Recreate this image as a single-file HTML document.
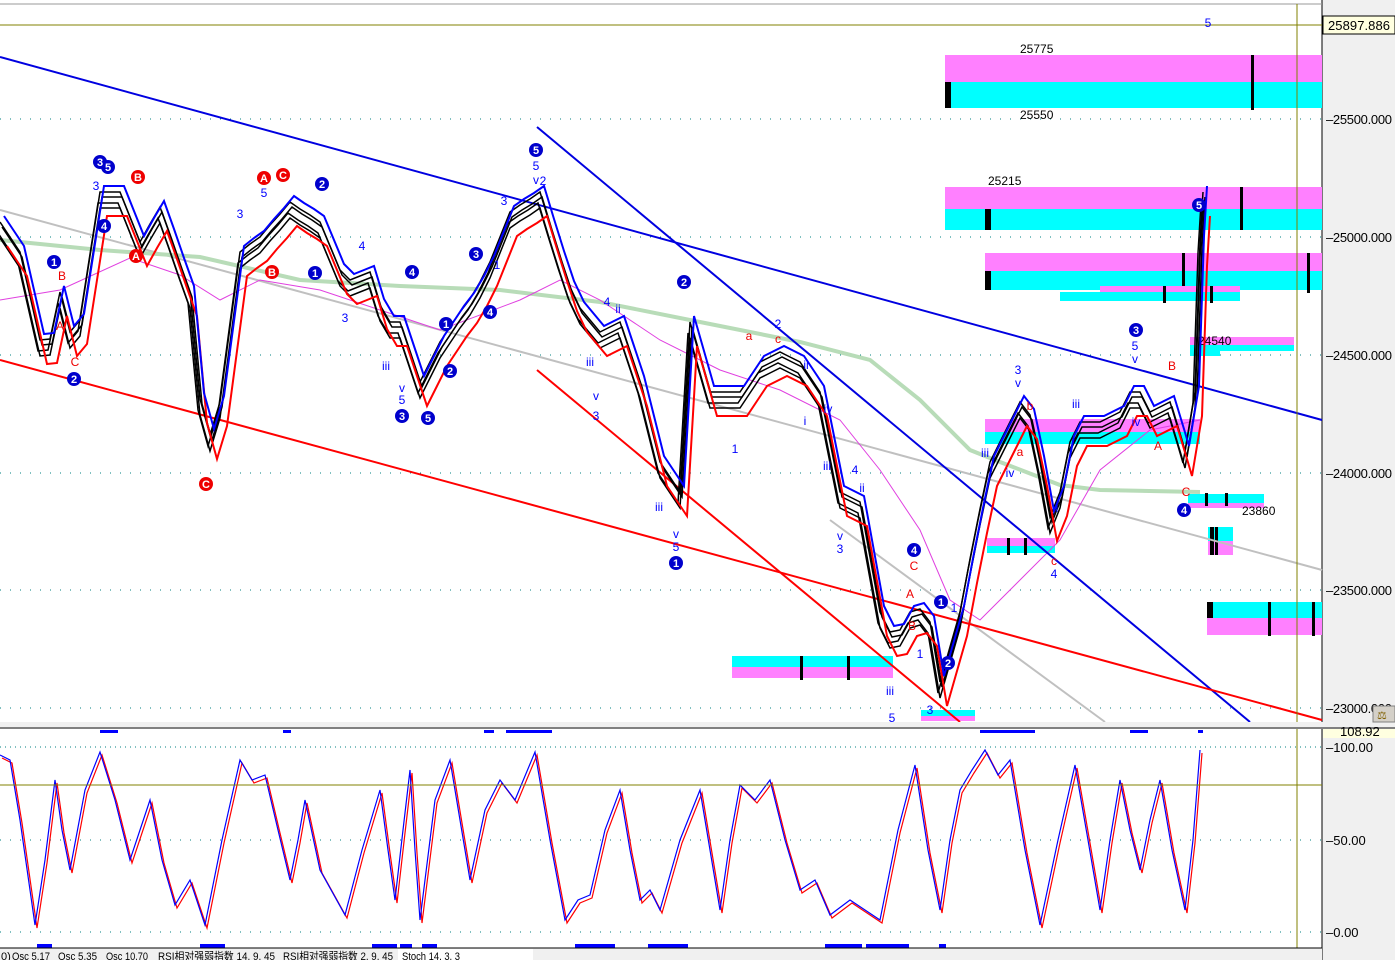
<!DOCTYPE html>
<html><head><meta charset="utf-8"><style>
html,body{margin:0;padding:0;background:#fff;width:1395px;height:960px;overflow:hidden;font-family:"Liberation Sans",sans-serif}
svg{position:absolute;left:0;top:0}
</style></head><body>
<svg width="1395" height="960" xmlns="http://www.w3.org/2000/svg" xmlns:xlink="http://www.w3.org/1999/xlink" font-family="Liberation Sans, sans-serif">
<defs>
<polyline id="pp" fill="none" points="0,230 10,245 20,260 30,304 40,348 50,347 60,300 70,340 80,328 90,264 100,200 110,200 120,200 130,225 140,250 150,232 160,215 170,243 180,272 190,300 200,407 210,443 220,410 230,335 240,260 250,252 260,245 270,233 280,222 290,210 300,217 310,223 320,230 330,254 340,278 350,288 360,284 370,280 380,313 390,330 400,330 410,360 420,390 430,370 440,350 450,335 460,320 470,307 480,290 490,270 500,245 510,220 520,213 530,207 540,200 550,233 560,265 570,295 580,316 590,328 600,340 610,335 620,330 630,360 640,390 650,430 660,470 670,485 680,500 690,330 700,365 710,400 720,400 730,400 740,400 750,385 760,370 770,365 780,360 790,365 800,370 810,385 820,400 830,450 840,500 850,505 860,510 870,565 880,620 890,640 900,638 910,620 920,617 930,630 940,690 950,655 960,620 970,567 980,517 990,470 1000,450 1010,430 1020,410 1030,423 1040,470 1050,525 1060,500 1070,450 1080,430 1090,430 1100,430 1110,425 1120,420 1130,400 1140,400 1150,420 1160,415 1170,410 1180,443 1185,460 1190,430 1195,400 1200,250 1203,200"/>
<polyline id="oo" fill="none" points="0,755 10,760 20,820 35,925 45,860 55,780 62,830 70,870 85,790 100,752 115,800 130,860 140,830 150,800 162,860 175,905 190,880 205,925 222,840 240,760 252,780 265,775 278,830 290,880 298,840 305,800 320,870 345,915 362,850 380,790 388,850 395,900 403,830 410,770 415,850 420,920 435,800 450,760 460,820 470,880 485,810 500,780 515,800 535,752 550,840 565,920 578,900 590,895 605,830 620,790 630,850 640,900 650,890 660,910 680,840 700,790 710,850 720,910 730,840 740,785 755,800 770,780 785,840 800,890 815,880 830,915 850,900 865,910 880,920 898,830 915,765 928,850 940,910 950,840 960,790 972,770 985,750 998,775 1010,760 1025,850 1040,925 1058,840 1075,765 1088,840 1100,910 1110,840 1120,780 1130,830 1140,870 1150,820 1160,780 1172,850 1185,910 1193,840 1200,750"/>
</defs>
<rect x="1322" y="0" width="73" height="960" fill="#f0f0f0"/>
<line x1="1322" y1="0" x2="1322" y2="960" stroke="#000"/>
<line x1="0" y1="4" x2="1322" y2="4" stroke="#999"/>
<g stroke="#008080" stroke-dasharray="1 9">
<line x1="0" y1="119" x2="1322" y2="119"/><line x1="0" y1="237" x2="1322" y2="237"/><line x1="0" y1="355" x2="1322" y2="355"/><line x1="0" y1="473" x2="1322" y2="473"/><line x1="0" y1="590" x2="1322" y2="590"/><line x1="0" y1="708" x2="1322" y2="708"/><line x1="0" y1="840" x2="1322" y2="840"/><line x1="0" y1="932" x2="1322" y2="932"/>
</g>
<g>
<rect x="945" y="55" width="377" height="27" fill="#ff80ff"/><rect x="945" y="82" width="377" height="26" fill="#00ffff"/>
<rect x="945" y="82" width="6" height="26" fill="#000"/><rect x="1251" y="55" width="3" height="55" fill="#000"/>
<rect x="945" y="187" width="377" height="22" fill="#ff80ff"/><rect x="945" y="209" width="377" height="21" fill="#00ffff"/>
<rect x="985" y="209" width="6" height="21" fill="#000"/><rect x="1240" y="187" width="3" height="43" fill="#000"/>
<rect x="985" y="253" width="337" height="18" fill="#ff80ff"/><rect x="985" y="271" width="337" height="19" fill="#00ffff"/>
<rect x="985" y="271" width="6" height="19" fill="#000"/><rect x="1182" y="253" width="3" height="37" fill="#000"/><rect x="1307" y="253" width="3" height="40" fill="#000"/>
<rect x="1100" y="286" width="140" height="8" fill="#ff80ff"/><rect x="1060" y="292" width="180" height="9" fill="#00ffff"/>
<rect x="1163" y="286" width="3" height="17" fill="#000"/><rect x="1210" y="286" width="3" height="17" fill="#000"/>
<rect x="1190" y="337" width="104" height="8" fill="#ff80ff"/><rect x="1190" y="345" width="104" height="6" fill="#00ffff"/>
<rect x="1190" y="350" width="30" height="6" fill="#00ffff"/>
<rect x="985" y="419" width="215" height="13" fill="#ff80ff"/><rect x="985" y="432" width="215" height="12" fill="#00ffff"/>
<rect x="987" y="538" width="68" height="8" fill="#ff80ff"/><rect x="987" y="546" width="68" height="7" fill="#00ffff"/>
<rect x="1007" y="538" width="3" height="17" fill="#000"/><rect x="1024" y="538" width="3" height="17" fill="#000"/>
<rect x="1188" y="494" width="76" height="9" fill="#00ffff"/><rect x="1188" y="503" width="76" height="5" fill="#ff80ff"/>
<rect x="1205" y="493" width="3" height="13" fill="#000"/><rect x="1225" y="493" width="3" height="13" fill="#000"/>
<rect x="1208" y="527" width="25" height="14" fill="#00ffff"/><rect x="1208" y="541" width="25" height="14" fill="#ff80ff"/>
<rect x="1210" y="527" width="4" height="28" fill="#000"/><rect x="1215" y="527" width="3" height="28" fill="#000"/>
<rect x="1207" y="602" width="115" height="16" fill="#00ffff"/><rect x="1207" y="618" width="115" height="17" fill="#ff80ff"/>
<rect x="1207" y="602" width="6" height="16" fill="#000"/><rect x="1268" y="602" width="3" height="34" fill="#000"/><rect x="1312" y="602" width="3" height="34" fill="#000"/>
<rect x="732" y="656" width="161" height="11" fill="#00ffff"/><rect x="732" y="667" width="161" height="11" fill="#ff80ff"/>
<rect x="800" y="656" width="3" height="24" fill="#000"/><rect x="847" y="656" width="3" height="24" fill="#000"/>
<rect x="921" y="710" width="54" height="6" fill="#00ffff"/><rect x="921" y="716" width="54" height="5" fill="#ff80ff"/>
</g>
<g font-size="12" fill="#000">
<text x="1020" y="53">25775</text><text x="1020" y="119">25550</text><text x="988" y="185">25215</text>
<text x="1198" y="345">24540</text><text x="1242" y="515">23860</text>
</g>
<polyline points="0,210 1322,570" stroke="#c0c0c0" stroke-width="2" fill="none"/>
<polyline points="830,520 1105,722" stroke="#c0c0c0" stroke-width="2" fill="none"/>
<polyline points="0,240 100,250 200,257 300,280 400,286 500,290 600,302 700,322 800,342 870,360 920,400 970,450 1000,462 1060,485 1100,490 1200,492" stroke="#b8dcb8" stroke-width="4" fill="none"/>
<polyline points="0,300 60,290 130,258 180,275 220,300 260,280 320,290 380,310 440,330 520,300 560,280 600,300 660,340 720,370 780,390 840,420 880,470 920,530 950,600 980,620 1020,580 1060,540 1100,470 1150,430 1200,420" stroke="#e040e0" stroke-width="1" fill="none"/>
<polyline points="0,57 1322,420" stroke="#0000e0" stroke-width="2" fill="none"/>
<polyline points="537,127 1250,722" stroke="#0000e0" stroke-width="2" fill="none"/>
<polyline points="0,360 1322,720" stroke="#ff0000" stroke-width="2" fill="none"/>
<polyline points="537,370 960,722" stroke="#ff0000" stroke-width="2" fill="none"/>
<use xlink:href="#pp" href="#pp" stroke="#000" stroke-width="1.5" transform="translate(0,-8)"/>
<use xlink:href="#pp" href="#pp" stroke="#000" stroke-width="1.5" transform="translate(2,-3)"/>
<use xlink:href="#pp" href="#pp" stroke="#000" stroke-width="1.5" transform="translate(-2,3)"/>
<use xlink:href="#pp" href="#pp" stroke="#000" stroke-width="1.5" transform="translate(0,8)"/>
<use xlink:href="#pp" href="#pp" stroke="#ff0000" stroke-width="2" transform="translate(7,16)"/>
<use xlink:href="#pp" href="#pp" stroke="#0000ff" stroke-width="2" transform="translate(4,-14)"/>
<use xlink:href="#oo" href="#oo" stroke="#ff0000" stroke-width="1.2" transform="translate(2,3)"/>
<use xlink:href="#oo" href="#oo" stroke="#0000ff" stroke-width="1.2"/>
<line x1="1297" y1="4" x2="1297" y2="960" stroke="#808000"/>
<line x1="0" y1="25" x2="1322" y2="25" stroke="#808000"/>
<line x1="0" y1="785" x2="1322" y2="785" stroke="#808000"/>
<line x1="0" y1="747" x2="1322" y2="747" stroke="#008080" stroke-dasharray="1 4"/>
<rect x="0" y="722" width="1395" height="6" fill="#f0f0f0"/>
<line x1="0" y1="728" x2="1395" y2="728" stroke="#808080" stroke-width="2"/>
<g fill="#0000ff">
<rect x="100" y="730" width="18" height="3"/><rect x="283" y="730" width="8" height="3"/><rect x="484" y="730" width="10" height="3"/><rect x="506" y="730" width="46" height="3"/><rect x="980" y="730" width="55" height="3"/><rect x="1130" y="730" width="18" height="3"/><rect x="1198" y="730" width="5" height="3"/>
<rect x="37" y="944" width="15" height="4"/><rect x="200" y="944" width="25" height="4"/><rect x="372" y="944" width="25" height="4"/><rect x="400" y="944" width="12" height="4"/><rect x="422" y="944" width="15" height="4"/><rect x="575" y="944" width="40" height="4"/><rect x="648" y="944" width="40" height="4"/><rect x="825" y="944" width="37" height="4"/><rect x="866" y="944" width="43" height="4"/><rect x="939" y="944" width="7" height="4"/>
</g>
<g font-size="11" font-weight="bold" fill="#fff" text-anchor="middle">
<g fill="#0000cc"><circle cx="100" cy="162" r="7"/><circle cx="108" cy="167" r="7"/><circle cx="104" cy="226" r="7"/><circle cx="54" cy="262" r="7"/><circle cx="74" cy="379" r="7"/><circle cx="322" cy="184" r="7"/><circle cx="315" cy="273" r="7"/><circle cx="412" cy="272" r="7"/><circle cx="402" cy="416" r="7"/><circle cx="428" cy="418" r="7"/><circle cx="450" cy="371" r="7"/><circle cx="446" cy="324" r="7"/><circle cx="476" cy="254" r="7"/><circle cx="490" cy="312" r="7"/><circle cx="536" cy="150" r="7"/><circle cx="684" cy="282" r="7"/><circle cx="676" cy="563" r="7"/><circle cx="914" cy="550" r="7"/><circle cx="941" cy="602" r="7"/><circle cx="948" cy="663" r="7"/><circle cx="1136" cy="330" r="7"/><circle cx="1184" cy="510" r="7"/><circle cx="1199" cy="205" r="7"/></g>
<g fill="#ee0000"><circle cx="138" cy="177" r="7"/><circle cx="136" cy="256" r="7"/><circle cx="206" cy="484" r="7"/><circle cx="264" cy="178" r="7"/><circle cx="283" cy="175" r="7"/><circle cx="272" cy="272" r="7"/></g>
<text x="100" y="166">3</text><text x="108" y="171">5</text><text x="104" y="230">4</text><text x="54" y="266">1</text><text x="74" y="383">2</text><text x="322" y="188">2</text><text x="315" y="277">1</text><text x="412" y="276">4</text><text x="402" y="420">3</text><text x="428" y="422">5</text><text x="450" y="375">2</text><text x="446" y="328">1</text><text x="476" y="258">3</text><text x="490" y="316">4</text><text x="536" y="154">5</text><text x="684" y="286">2</text><text x="676" y="567">1</text><text x="914" y="554">4</text><text x="941" y="606">1</text><text x="948" y="667">2</text><text x="1136" y="334">3</text><text x="1184" y="514">4</text><text x="1199" y="209">5</text>
<text x="138" y="181">B</text><text x="136" y="260">A</text><text x="206" y="488">C</text><text x="264" y="182">A</text><text x="283" y="179">C</text><text x="272" y="276">B</text>
</g>
<g font-size="12" text-anchor="middle" fill="#0000ff">
<text x="1208" y="27">5</text><text x="96" y="190">3</text><text x="240" y="218">3</text><text x="264" y="197">5</text><text x="345" y="322">3</text><text x="362" y="250">4</text><text x="386" y="370">iii</text><text x="402" y="392">v</text><text x="402" y="404">5</text><text x="536" y="170">5</text><text x="536" y="184">v</text><text x="543" y="185">2</text><text x="504" y="205">3</text><text x="497" y="269">1</text><text x="596" y="400">v</text><text x="596" y="420">3</text><text x="590" y="366">iii</text><text x="607" y="306">4</text><text x="618" y="313">ii</text><text x="659" y="511">iii</text><text x="676" y="538">v</text><text x="676" y="551">5</text><text x="735" y="453">1</text><text x="778" y="328">2</text><text x="806" y="369">ii</text><text x="805" y="425">i</text><text x="827" y="470">iii</text><text x="828" y="413">iv</text><text x="840" y="540">v</text><text x="840" y="553">3</text><text x="855" y="474">4</text><text x="862" y="492">ii</text><text x="920" y="658">1</text><text x="890" y="695">iii</text><text x="892" y="722">5</text><text x="930" y="714">3</text><text x="954" y="612">1</text><text x="985" y="457">iii</text><text x="1018" y="374">3</text><text x="1018" y="387">v</text><text x="1010" y="477">iv</text><text x="1076" y="408">iii</text><text x="1135" y="350">5</text><text x="1135" y="363">v</text><text x="1136" y="426">iv</text><text x="1054" y="578">4</text><text x="1057" y="512">i</text>
</g>
<g font-size="12" text-anchor="middle" fill="#ee0000">
<text x="62" y="280">B</text><text x="75" y="366">C</text><text x="60" y="330">A</text><text x="749" y="340">a</text><text x="778" y="343">c</text><text x="914" y="570">C</text><text x="910" y="598">A</text><text x="912" y="630">B</text><text x="1030" y="410">b</text><text x="1020" y="456">a</text><text x="1172" y="370">B</text><text x="1158" y="450">A</text><text x="1186" y="496">C</text><text x="1054" y="565">c</text>
</g>
<g font-size="13" fill="#000">
<rect x="1323" y="16" width="72" height="18" fill="#ffffe0" stroke="#000"/>
<text x="1328" y="30" textLength="62">25897.886</text>
<text x="1326" y="124" textLength="66">–25500.000</text><text x="1326" y="242" textLength="66">–25000.000</text><text x="1326" y="360" textLength="66">–24500.000</text><text x="1326" y="478" textLength="66">–24000.000</text><text x="1326" y="595" textLength="66">–23500.000</text><text x="1326" y="713" textLength="66">–23000.000</text>
<rect x="1323" y="729" width="72" height="9" fill="#ffffe0"/><text x="1340" y="736">108.92</text>
<text x="1326" y="752">–100.00</text><text x="1326" y="845">–50.00</text><text x="1326" y="937">–0.00</text>
<rect x="1373" y="706" width="22" height="16" fill="#d4d0c8" stroke="#808080"/><text x="1377" y="719" font-size="11" fill="#806000">⚖</text>
</g>
<rect x="0" y="948" width="1322" height="12" fill="#f0f0f0"/>
<line x1="0" y1="948" x2="1322" y2="948" stroke="#000"/>
<rect x="398" y="949" width="135" height="11" fill="#fff"/>
<g font-size="11" fill="#000" font-family="Liberation Sans, Noto Sans CJK SC, sans-serif" lengthAdjust="spacingAndGlyphs">
<text x="1" y="960">0)</text><text x="12" y="960" textLength="38" lengthAdjust="spacingAndGlyphs">Osc 5,17</text><text x="58" y="960" textLength="39" lengthAdjust="spacingAndGlyphs">Osc 5,35</text><text x="106" y="960" textLength="42" lengthAdjust="spacingAndGlyphs">Osc 10,70</text><text x="158" y="960" textLength="117" lengthAdjust="spacingAndGlyphs">RSI相对强弱指数 14, 9, 45</text><text x="283" y="960" textLength="110" lengthAdjust="spacingAndGlyphs">RSI相对强弱指数 2, 9, 45</text><text x="402" y="960" textLength="58" lengthAdjust="spacingAndGlyphs">Stoch 14, 3, 3</text>
</g>
</svg>
</body></html>
